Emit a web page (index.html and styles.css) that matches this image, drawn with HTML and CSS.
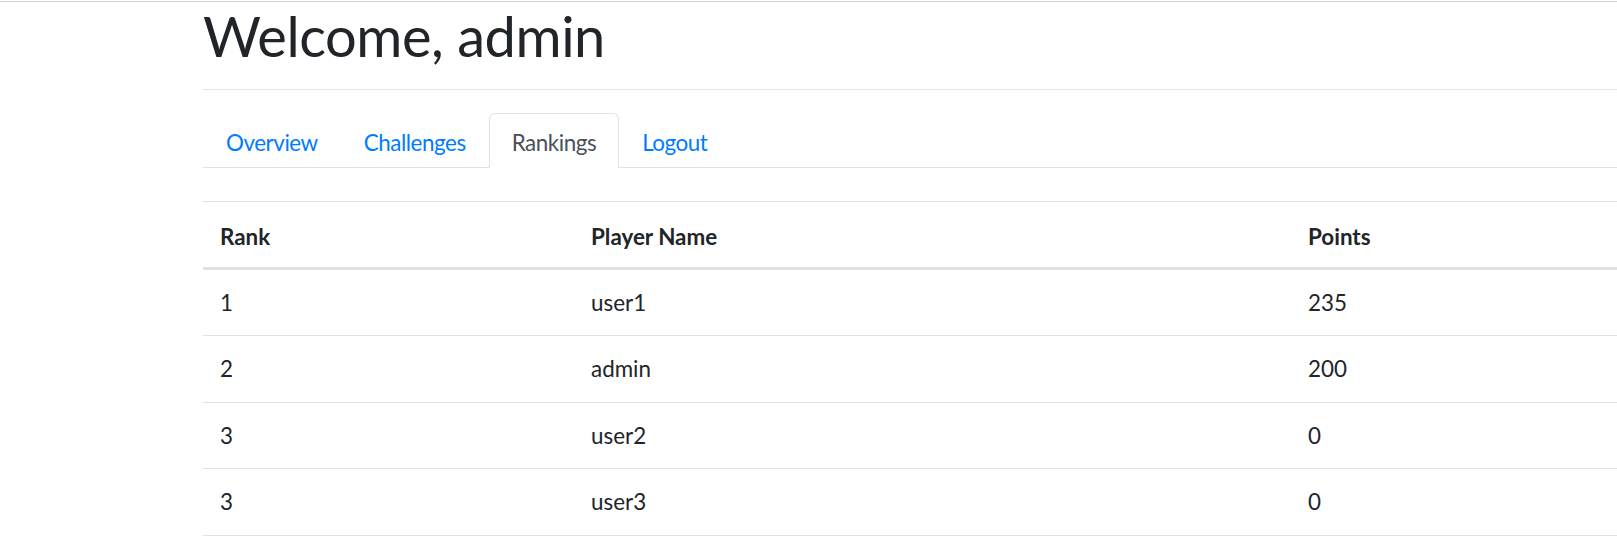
FILE: index.html
```html
<!DOCTYPE html>
<html lang="en">
<head>
<meta charset="utf-8">
<title>Rankings</title>
<link rel="stylesheet" href="styles.css">
</head>
<body>
<div class="topline"></div>
<main class="container">
  <h1 class="welcome">Welcome, admin</h1>
  <hr class="rule">
  <ul class="tabs">
    <li class="tab"><a class="tab-link" href="#">Overview</a></li>
    <li class="tab"><a class="tab-link" href="#">Challenges</a></li>
    <li class="tab"><a class="tab-link active" href="#">Rankings</a></li>
    <li class="tab"><a class="tab-link" href="#">Logout</a></li>
  </ul>
  <table class="ranking">
    <thead>
      <tr><th class="c-rank">Rank</th><th class="c-name">Player Name</th><th class="c-points">Points</th></tr>
    </thead>
    <tbody>
      <tr><td>1</td><td>user1</td><td>235</td></tr>
      <tr><td>2</td><td>admin</td><td>200</td></tr>
      <tr><td>3</td><td>user2</td><td>0</td></tr>
      <tr><td>3</td><td>user3</td><td>0</td></tr>
    </tbody>
  </table>
</main>
</body>
</html>
```
FILE: styles.css
```css
html, body {
  margin: 0;
  padding: 0;
  background: #fff;
  overflow: hidden;
}
body {
  font-family: Lato, "Segoe UI", "Noto Sans", sans-serif;
  font-size: 22.4px;
  color: #212529;
}
.topline {
  margin-top: 1px;
  border-top: 1px solid #d4d4d4;
}
.container {
  padding-left: 203px;
}
.welcome {
  margin: 4px 0 0;
  font-size: 56px;
  line-height: 60px;
  font-weight: 400;
  letter-spacing: -0.45px;
  color: #212529;
}
.rule {
  margin: 23px 0 0;
  border: 0;
  border-top: 1px solid #e3e3e3;
  height: 0;
}
.tabs {
  display: flex;
  list-style: none;
  margin: 23px 0 0;
  padding: 0;
  border-bottom: 1px solid #dee2e6;
}
.tab {
  margin-bottom: -1px;
}
.tab-link {
  display: block;
  padding: 12px 22px 8px;
  line-height: 33px;
  letter-spacing: -0.45px;
  border: 1px solid transparent;
  border-top-left-radius: 6px;
  border-top-right-radius: 6px;
  color: #007bff;
  text-decoration: none;
}
.tab-link.active {
  color: #495057;
  background: #fff;
  border-color: #dee2e6 #dee2e6 #fff;
}
.ranking {
  margin-top: 33px;
  width: 100%;
  border-collapse: collapse;
}
.ranking th,
.ranking td {
  text-align: left;
  padding: 16px 17px;
  line-height: 33.5px;
  border-top: 1px solid #dee2e6;
  vertical-align: top;
}
.ranking th {
  font-weight: 700;
  padding-top: 19px;
  padding-bottom: 13px;
  line-height: 32.5px;
  border-bottom: 3px solid #dee2e6;
}
.ranking tbody tr:last-child td {
  border-bottom: 1px solid #dee2e6;
}
.c-rank { width: 337px; }
.c-name { width: 683px; }
```
